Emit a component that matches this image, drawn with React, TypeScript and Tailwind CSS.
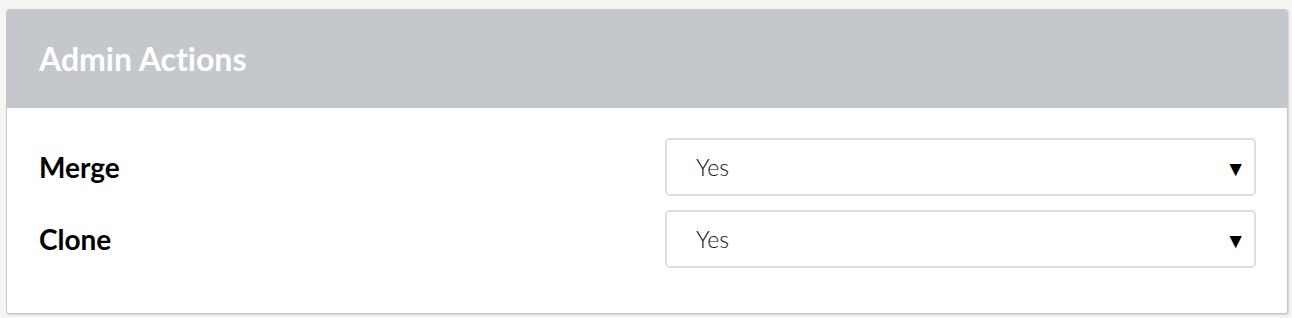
import React from "react";

function SelectBox() {
  return (
    <div className="relative h-[58px] w-[591px] rounded-[5px] border-2 border-[#dcdedf] bg-white">
      <span className="absolute left-[29px] top-1/2 -translate-y-1/2 text-[23px] font-light text-[#111]">Yes</span>
      <span className="absolute right-[8px] top-1/2 -translate-y-1/2 text-[21px] leading-none text-black">▼</span>
    </div>
  );
}

export default function App() {
  return (
    <div className="h-[318px] w-[1292px] bg-[#f6f5f4] pl-[6px] pt-[9px]" style={{ fontFamily: "Lato, 'Open Sans', sans-serif" }}>
      <div className="h-[305px] w-[1282px] overflow-hidden rounded-[3px] border border-[#c6c8ca] bg-white shadow-[1px_1px_2px_rgba(0,0,0,0.15)]">
        <div className="flex h-[98px] items-center bg-[#c4c7cb] pl-[32px]">
          <h2 className="text-[32px] font-bold text-white [font-variant-ligatures:none]">Admin Actions</h2>
        </div>
        <div className="flex flex-col gap-[14px] pl-[32px] pr-[31px] pt-[30px]">
          <div className="flex items-center justify-between">
            <span className="text-[28px] font-bold text-black">Merge</span>
            <SelectBox />
          </div>
          <div className="flex items-center justify-between">
            <span className="text-[28px] font-bold text-black">Clone</span>
            <SelectBox />
          </div>
        </div>
      </div>
    </div>
  );
}
